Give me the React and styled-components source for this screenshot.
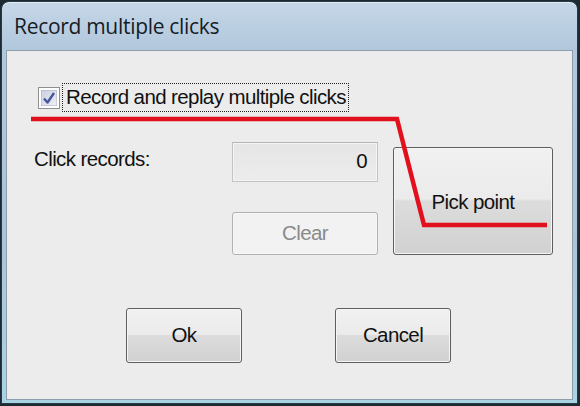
import React from 'react';
import styled, { createGlobalStyle } from 'styled-components';

const GlobalStyle = createGlobalStyle`
  html, body {
    margin: 0;
    padding: 0;
    background: #1d2a33;
  }
  body {
    width: 580px;
    height: 406px;
    overflow: hidden;
  }
`;

const Window = styled.div`
  position: relative;
  box-sizing: border-box;
  width: 577px;
  height: 403px;
  margin: 1px 2px 2px 1px;
  display: flex;
  flex-direction: column;
  border: 1px solid #2a3a44;
  border-radius: 8px 8px 0 0;
  background: linear-gradient(#c6d7e8 0px, #b1c7dc 48px, #abc4da 60%, #a9d4e4 100%);
  box-shadow: inset 0 1px 0 #e4eef7;
`;

const TitleBar = styled.div`
  height: 48px;
  display: flex;
  align-items: center;
  padding-left: 12px;
  font-family: "Open Sans", "Noto Sans", sans-serif;
  font-size: 21px;
  color: #151c26;
  letter-spacing: -0.3px;
`;

const Client = styled.div`
  flex: 1;
  margin: 0 4px 3px 4px;
  display: flex;
  flex-direction: column;
  background: #ececec;
  border: 1px solid #8d9dab;
  padding-top: 32px;
  font-family: "Liberation Sans", Arial, sans-serif;
  font-size: 20.5px;
  letter-spacing: -0.6px;
  color: #111;
`;

const CheckRow = styled.label`
  display: flex;
  align-items: center;
  gap: 2px;
  margin-left: 31px;
  height: 29px;
`;

const CheckBox = styled.span`
  box-sizing: border-box;
  width: 22px;
  height: 22px;
  border: 1px solid #8e8f8f;
  background: #fff;
  padding: 2px;
  display: flex;
  svg { display: block; }
`;

const FocusLabel = styled.span`
  border: 1px dotted #222;
  padding: 2px 2px 3px 3px;
  line-height: 22px;
`;

const FieldGrid = styled.div`
  display: grid;
  grid-template-columns: 183px 146px 160px;
  grid-template-rows: 40px 43px;
  column-gap: 15px;
  row-gap: 30px;
  margin: 30px 0 0 27px;
`;

const FieldLabel = styled.div`
  display: flex;
  align-items: flex-start;
  padding-top: 5px;
`;

const ReadBox = styled.div`
  box-sizing: border-box;
  border: 1px solid #c3c3c3;
  border-top-color: #b4b4b4;
  background: linear-gradient(#e6e6e6, #ececec);
  box-shadow: inset 0 0 0 1px #f4f4f4;
  display: flex;
  align-items: center;
  justify-content: flex-end;
  padding-right: 10px;
  padding-bottom: 2px;
`;

const Button = styled.button`
  box-sizing: border-box;
  border: 1px solid ${p => (p.disabled ? '#adb2b5' : '#5e5e5e')};
  border-radius: 3px;
  padding: 0 0 2px;
  font: inherit;
  letter-spacing: inherit;
  color: ${p => (p.disabled ? '#8a8a8a' : '#111')};
  background: ${p =>
    p.disabled
      ? '#f2f2f2'
      : 'linear-gradient(#f1f1f1 0%, #ebebeb 48%, #dcdcdc 50%, #d1d1d1 100%)'};
  box-shadow: inset 0 0 0 1px ${p => (p.disabled ? '#f7f7f7' : '#f6f6f6')};
  width: ${p => p.$w || 'auto'};
  height: ${p => p.$h || 'auto'};
  cursor: default;
`;

const PickButton = styled(Button)`
  grid-column: 3;
  grid-row: 1 / span 2;
  align-self: end;
  height: 108px;
  padding: 2px 0 0;
`;

const ActionRow = styled.div`
  display: flex;
  justify-content: center;
  gap: 93px;
  margin-top: 53px;
  padding-right: 2px;
`;

const Annotation = styled.svg`
  position: absolute;
  left: -1px;
  top: -1px;
  pointer-events: none;
`;

function CheckMark() {
  return (
    <svg width="16" height="16" viewBox="0 0 16 16">
      <defs>
        <linearGradient id="cbg" x1="0" y1="0" x2="1" y2="1">
          <stop offset="0" stopColor="#c9cfe0" />
          <stop offset="1" stopColor="#eef0f6" />
        </linearGradient>
      </defs>
      <rect x="0" y="0" width="16" height="16" fill="url(#cbg)" stroke="#a9afbd" strokeWidth="1" />
      <path d="M3 8.5 L6.5 12.5 L13 3" fill="none" stroke="#45589a" strokeWidth="2.4" strokeLinejoin="round" />
    </svg>
  );
}

export default function App() {
  return (
    <>
      <GlobalStyle />
      <Window>
        <TitleBar>Record multiple clicks</TitleBar>
        <Client>
          <CheckRow>
            <CheckBox>
              <CheckMark />
            </CheckBox>
            <FocusLabel>Record and replay multiple clicks</FocusLabel>
          </CheckRow>
          <FieldGrid>
            <FieldLabel>Click records:</FieldLabel>
            <ReadBox>0</ReadBox>
            <PickButton>Pick point</PickButton>
            <div />
            <Button disabled>Clear</Button>
          </FieldGrid>
          <ActionRow>
            <Button $w="116px" $h="55px">Ok</Button>
            <Button $w="116px" $h="55px">Cancel</Button>
          </ActionRow>
        </Client>
        <Annotation width="580" height="406" viewBox="0 0 580 406">
          <polyline
            points="30,118 396,118 423,224 546,224"
            fill="none"
            stroke="#e2101c"
            strokeWidth="4.5"
            strokeLinejoin="miter"
          />
        </Annotation>
      </Window>
    </>
  );
}
